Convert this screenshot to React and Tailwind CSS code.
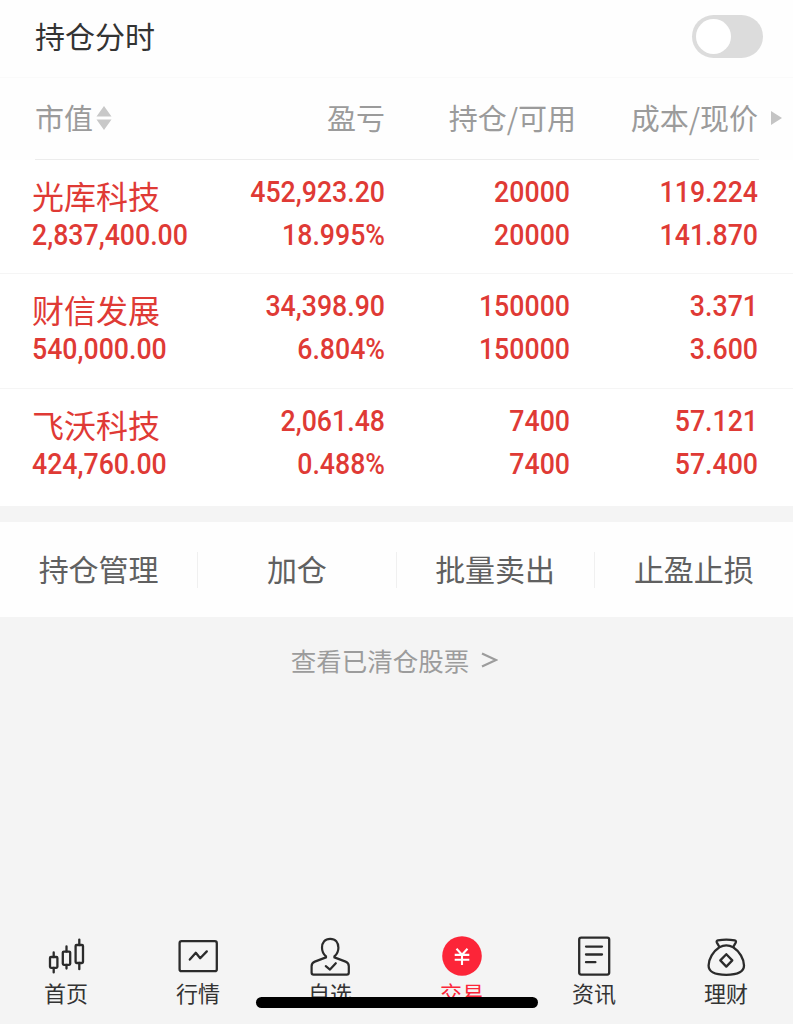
import React, { useState } from "react";

const HOLDINGS = [
    { name: "光库科技", value: "2,837,400.00", profit: "452,923.20", rate: "18.995%", total: "20000", usable: "20000", cost: "119.224", price: "141.870" },
    { name: "财信发展", value: "540,000.00", profit: "34,398.90", rate: "6.804%", total: "150000", usable: "150000", cost: "3.371", price: "3.600" },
    { name: "飞沃科技", value: "424,760.00", profit: "2,061.48", rate: "0.488%", total: "7400", usable: "7400", cost: "57.121", price: "57.400" },
];

const ACTIONS = ["持仓管理", "加仓", "批量卖出", "止盈止损"];

const HomeIcon = () => (
    <svg width="40" height="40" viewBox="0 0 40 40" fill="none" stroke="#2b2b2b" strokeWidth="2.3" strokeLinecap="round">
        <rect x="4" y="21" width="7.4" height="10.8" rx="1" />
        <path d="M7.7 16.4V21M7.7 31.8v4.6" />
        <rect x="16.8" y="15.6" width="7.4" height="13.2" rx="1" />
        <path d="M20.5 10.4v5.2M20.5 28.8v3.8" />
        <rect x="29.6" y="9" width="7.4" height="18" rx="1" />
        <path d="M33.3 3.6V9M33.3 27v6.2" />
    </svg>
);

const QuoteIcon = () => (
    <svg width="40" height="40" viewBox="0 0 40 40" fill="none" stroke="#2b2b2b" strokeWidth="2.3" strokeLinejoin="round" strokeLinecap="round">
        <rect x="1.6" y="5.2" width="37.2" height="30" rx="2" />
        <path d="M11.8 23.6l6-6.8 4.4 5.4 6.6-6.8" />
    </svg>
);

const PickIcon = () => (
    <svg width="40" height="40" viewBox="0 0 40 40" fill="none" stroke="#2b2b2b" strokeWidth="2.2" strokeLinejoin="round" strokeLinecap="round">
        <path d="M16 21.400v-1c-2.600-2.200-4-5-4-8.600C12 6.400 15 2.800 20.200 2.800s8.200 3.600 8.200 9c0 3.600-1.400 6.400-4 8.600v1l11.200 4.200c2.400.9 3.200 2 3.200 4.600v6.200c0 1.600-.6 2.200-2 2.200H3.600c-1.400 0-2-.6-2-2.200v-6.200c0-2.600.8-3.700 3.200-4.600z" />
        <path d="M15.800 30.200l4.200 3.400 5.800-6.400" />
    </svg>
);

const TradeIcon = () => (
    <svg width="40" height="40" viewBox="0 0 40 40" fill="none">
        <circle cx="20" cy="20" r="19.8" fill="#fc2538" />
        <path d="M14.5 12.8l5.500 5.800 5.500-5.800M12.700 18.900h14.600M12.700 23.800h14.600M20 18.600v10.400" stroke="#fff" strokeWidth="2.1" />
    </svg>
);

const NewsIcon = () => (
    <svg width="40" height="40" viewBox="0 0 40 40" fill="none" stroke="#2b2b2b" strokeWidth="2.3" strokeLinecap="round">
        <rect x="5.2" y="1.6" width="30" height="37" rx="2" />
        <path d="M12 10.600h16M12 18.500h16M12 26.200h9.400" />
    </svg>
);

const WealthIcon = () => (
    <svg width="40" height="40" viewBox="0 0 40 40" fill="none" stroke="#2b2b2b" strokeWidth="2.3" strokeLinejoin="round">
        <path d="M13.400 11L10.900 6.600c-.6-1.200-.2-2 1-2.200 5.600-1 11.200-1 16.800 0 1.200.2 1.600 1 1 2.200L27.200 11" />
        <path d="M13.400 11.200c4.200-2.200 9.600-2.200 13.800 0 6.200 4 10.800 11.800 10.800 18.400 0 6.400-5.600 9.200-17.700 9.200s-17.700-2.800-17.700-9.200c0-6.600 4.600-14.400 10.800-18.400z" />
        <path d="M20.300 18.200l6 6.200-6 6.200-6-6.200z" />
    </svg>
);

const TABS = [
    { label: "首页", icon: HomeIcon },
    { label: "行情", icon: QuoteIcon },
    { label: "自选", icon: PickIcon },
    { label: "交易", icon: TradeIcon, active: true },
    { label: "资讯", icon: NewsIcon },
    { label: "理财", icon: WealthIcon },
];

// Narrow figures, squeezed towards the side they are aligned to
const Num = ({ children, left }) => (
    <span className={`block h-[43px] leading-[43px] text-[30px] font-medium font-['Roboto',sans-serif] scale-x-[0.89] whitespace-nowrap ${left ? "origin-left" : "origin-right text-right"}`}>
        {children}
    </span>
);

export default function App() {
    const [showChart, setShowChart] = useState(false);

    return (
        <div className="relative flex flex-col w-full h-screen overflow-hidden bg-[#f4f4f4] font-['Noto_Sans_CJK_SC',sans-serif]">
            {/* Toggle */}
            <div className="flex items-center justify-between h-[78px] pl-[35px] pr-[30px] pb-[5px] bg-[#fefefe] border-b border-[#fafafa]">
                <span className="pb-0.5 text-[30px] leading-[30px] text-[#333]">持仓分时</span>
                <button
                    onClick={() => setShowChart(!showChart)}
                    className={`flex items-center w-[71px] h-[43px] px-[4px] rounded-full bg-[#dcdcdc] ${showChart ? "justify-end" : "justify-start"}`}
                >
                    <span className="size-[35px] rounded-full bg-white" />
                </button>
            </div>

            {/* Column titles */}
            <div className="bg-[#fefefe]">
                <div className="grid grid-cols-[165px_187px_191px_182px_1fr] items-center h-[81px] pl-[33px] pb-0.5 text-[29px] leading-[29px] text-[#9b9b9b]">
                    <div className="flex items-center pl-0.5">
                        市值
                        <svg className="ml-[3px]" width="16" height="24" viewBox="0 0 16 24" fill="#c8c8c8">
                            <path d="M8 0l7.500 10.500H.5zM8 24l7.500-10.500H.5z" />
                        </svg>
                    </div>
                    <span className="text-right">盈亏</span>
                    <span className="text-right">持仓/可用</span>
                    <span className="text-right">成本/现价</span>
                    <svg className="ml-[13px]" width="11" height="14" viewBox="0 0 11 14" fill="#c4c4c4">
                        <path d="M0 0l11 7-11 7z" />
                    </svg>
                </div>
                <div className="h-px ml-[35px] mr-[34px] bg-[#ececec]" />
            </div>

            {/* Holdings */}
            <div className="h-[346px] bg-white text-[#df3a35]">
                {HOLDINGS.map((h) => (
                    <div key={h.name} className="grid grid-cols-[165px_188px_185px_188px] h-[114.300px] pl-8 pt-[10px] border-b border-[#f5f5f5] last:border-0">
                        <div>
                            <span className="block h-[43px] pt-1 text-[32px] leading-[43px] whitespace-nowrap">{h.name}</span>
                            <Num left>{h.value}</Num>
                        </div>
                        <div><Num>{h.profit}</Num><Num>{h.rate}</Num></div>
                        <div><Num>{h.total}</Num><Num>{h.usable}</Num></div>
                        <div><Num>{h.cost}</Num><Num>{h.price}</Num></div>
                    </div>
                ))}
            </div>

            {/* Actions */}
            <div className="grid grid-cols-4 items-center mt-4 h-[95px] bg-[#fefefe]">
                {ACTIONS.map((a) => (
                    <button key={a} className="h-9 text-[30px] leading-[33px] pb-[3px] text-[#606060] border-r border-[#f0f0f0] last:border-0">{a}</button>
                ))}
            </div>

            <div className="flex justify-center items-center gap-3 mt-[23px] mr-[4px] text-[25.500px] leading-10 text-[#9c9c9c]">
                <span>查看已清仓股票</span>
                <svg width="17" height="16" viewBox="0 0 17 16" fill="none" stroke="#9c9c9c" strokeWidth="2.2">
                    <path d="M1 1.500l14 6.500-14 6.500" />
                </svg>
            </div>

            {/* Bottom tabs */}
            <nav className="grid grid-cols-6 mt-auto w-[792px] h-[88px]">
                {TABS.map(({ label, icon: Icon, active }) => (
                    <button key={label} className="flex flex-col items-center">
                        <Icon />
                        <span className={`mt-0.5 text-[22px] leading-[28px] ${active ? "text-[#fc2538]" : "text-[#333]"}`}>{label}</span>
                    </button>
                ))}
            </nav>

            {/* Home indicator */}
            <div className="absolute left-[256px] bottom-4 w-[282px] h-[11px] rounded-full bg-black" />
        </div>
    );
}
